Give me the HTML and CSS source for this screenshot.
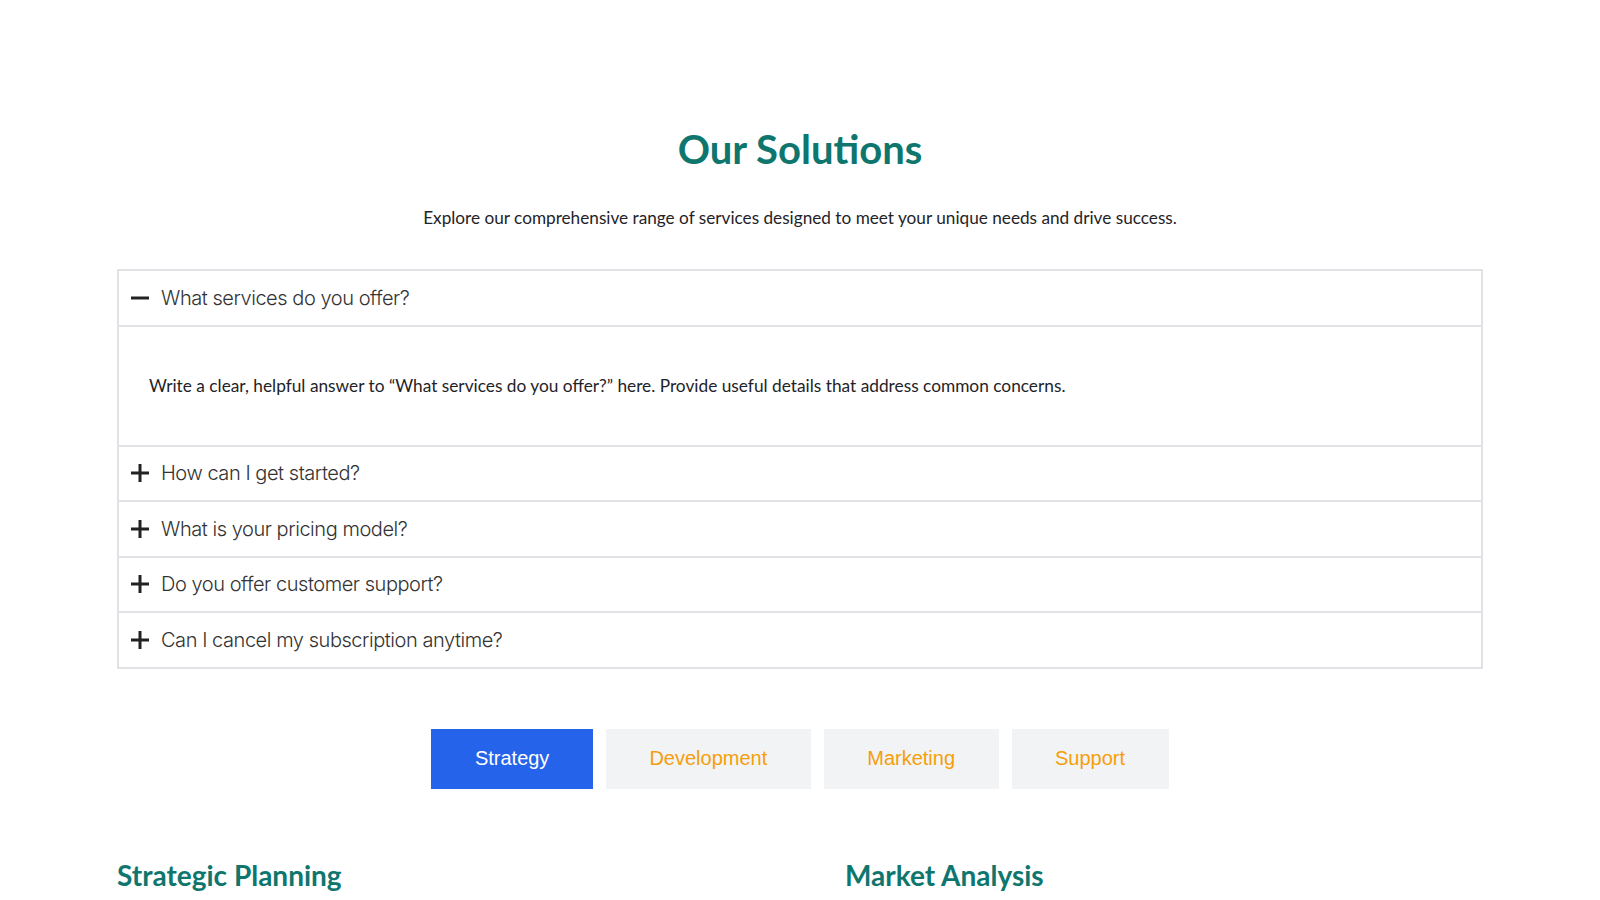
FILE: index.html
```html
<!DOCTYPE html>
<html lang="en">
<head>
<meta charset="utf-8">
<title>Our Solutions</title>
<link rel="stylesheet" href="styles.css">
</head>
<body>
<main class="page">
  <section class="solutions">
    <h1 class="title">Our Solutions</h1>
    <p class="subtitle">Explore our comprehensive range of services designed to meet your unique needs and drive success.</p>

    <div class="faq">
      <div class="faq-item open">
        <div class="faq-head">
          <svg class="faq-icon" viewBox="0 0 18 18"><path d="M0 9h18" stroke="#222" stroke-width="3"/></svg>
          <span class="faq-q">What services do you offer?</span>
        </div>
        <div class="faq-body">
          <p>Write a clear, helpful answer to “What services do you offer?” here. Provide useful details that address common concerns.</p>
        </div>
      </div>
      <div class="faq-item">
        <div class="faq-head">
          <svg class="faq-icon" viewBox="0 0 18 18"><path d="M0 9h18M9 0v18" stroke="#222" stroke-width="3"/></svg>
          <span class="faq-q">How can I get started?</span>
        </div>
      </div>
      <div class="faq-item">
        <div class="faq-head">
          <svg class="faq-icon" viewBox="0 0 18 18"><path d="M0 9h18M9 0v18" stroke="#222" stroke-width="3"/></svg>
          <span class="faq-q">What is your pricing model?</span>
        </div>
      </div>
      <div class="faq-item">
        <div class="faq-head">
          <svg class="faq-icon" viewBox="0 0 18 18"><path d="M0 9h18M9 0v18" stroke="#222" stroke-width="3"/></svg>
          <span class="faq-q">Do you offer customer support?</span>
        </div>
      </div>
      <div class="faq-item">
        <div class="faq-head">
          <svg class="faq-icon" viewBox="0 0 18 18"><path d="M0 9h18M9 0v18" stroke="#222" stroke-width="3"/></svg>
          <span class="faq-q">Can I cancel my subscription anytime?</span>
        </div>
      </div>
    </div>

    <div class="tabs">
      <button class="tab active">Strategy</button>
      <button class="tab">Development</button>
      <button class="tab">Marketing</button>
      <button class="tab">Support</button>
    </div>

    <div class="cards">
      <div class="card"><h2 class="card-title">Strategic Planning</h2></div>
      <div class="card"><h2 class="card-title">Market Analysis</h2></div>
    </div>
  </section>
</main>
</body>
</html>
```

FILE: styles.css
```css
html, body {
  margin: 0;
  padding: 0;
  background: #ffffff;
}
body {
  font-family: Lato, "Open Sans", sans-serif;
  color: #222;
  overflow: hidden;
}
.solutions {
  width: 1366px;
  margin: 0 auto;
  padding-top: 125px;
}
.title {
  margin: 0;
  text-align: center;
  font-family: Lato, sans-serif;
  font-weight: 700;
  font-size: 40px;
  line-height: 48px;
  color: #0f766e;
}
.subtitle {
  margin: 33px 0 0;
  text-align: center;
  font-size: 17.2px;
  line-height: 24px;
  color: #1f2328;
}
.faq {
  margin-top: 39px;
  border: 2px solid #e0e2e5;
  border-bottom: 0;
}
.faq-item {
  border-bottom: 2px solid #e0e2e5;
}
.faq-head {
  display: flex;
  align-items: center;
  height: 53.5px;
  padding: 0 12px;
  gap: 12px;
}
.faq-icon {
  width: 18px;
  height: 18px;
  flex: none;
}
.faq-q {
  font-family: Inter, sans-serif;
  font-weight: 300;
  font-size: 20px;
  color: #333;
  letter-spacing: -0.45px;
}
.faq-body {
  border-top: 2px solid #e0e2e5;
  height: 118px;
  display: flex;
  align-items: center;
  padding: 0 30px;
}
.faq-body p {
  margin: 0;
  font-size: 17.3px;
  line-height: 24px;
  color: #1f2328;
}
.tabs {
  display: flex;
  justify-content: center;
  gap: 13px;
  margin-top: 60px;
}
.tab {
  height: 60px;
  padding: 0 43.5px;
  border: 0;
  background: #f2f3f5;
  color: #f59e0b;
  font-family: "Liberation Sans", Arial, sans-serif;
  font-size: 20px;
}
.tab.active {
  background: #2563eb;
  color: #ffffff;
}
.cards {
  display: grid;
  grid-template-columns: 1fr 1fr;
  column-gap: 90px;
  margin-top: 68px;
}
.card-title {
  margin: 0;
  font-family: Lato, sans-serif;
  font-weight: 700;
  font-size: 28px;
  line-height: 36px;
  color: #0f766e;
}
```
